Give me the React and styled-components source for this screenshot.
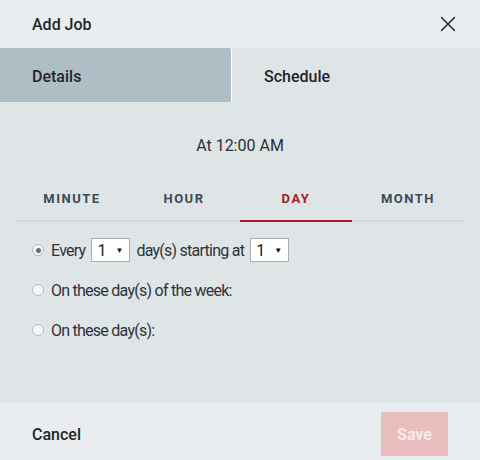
import React, { useState } from 'react'
import styled, { createGlobalStyle } from 'styled-components'

const GlobalStyle = createGlobalStyle`
  html, body {
    margin: 0;
    padding: 0;
    background: #e9edf0;
  }
  body {
    font-family: Roboto, "Liberation Sans", Arial, sans-serif;
    color: #212529;
  }
`

const Dialog = styled.div`
  width: 480px;
  height: 460px;
  display: flex;
  flex-direction: column;
  background: #e9edf0;
  overflow: hidden;
`

const Header = styled.div`
  height: 48px;
  display: flex;
  align-items: center;
  justify-content: space-between;
  padding: 0 20px 0 32px;
`

const Title = styled.div`
  font-size: 16px;
  font-weight: 500;
  color: #212529;
`

const CloseButton = styled.button`
  border: 0;
  background: none;
  padding: 0;
  width: 24px;
  height: 24px;
  display: flex;
  align-items: center;
  justify-content: center;
  cursor: pointer;
`

const TabBar = styled.div`
  height: 54px;
  display: grid;
  grid-template-columns: 232px 1fr;
  background: #dfe4e7;
`

const PageTab = styled.div`
  display: flex;
  align-items: center;
  padding-left: 32px;
  padding-top: 2px;
  font-size: 16px;
  font-weight: 500;
  color: #212529;
  background: ${(p) => (p.$active ? '#afbdc4' : '#dfe4e7')};
  border-top-right-radius: ${(p) => (p.$active ? '3px' : '0')};
  border-right: ${(p) => (p.$active ? '1px solid #ffffff' : '0')};
`

const Body = styled.div`
  flex: 1;
  background: #dfe4e7;
  padding: 34px 16px 0;
`

const Summary = styled.div`
  text-align: center;
  font-size: 16px;
  line-height: 20px;
  color: #2b3034;
`

const PeriodTabs = styled.div`
  margin-top: 20px;
  display: grid;
  grid-template-columns: repeat(4, 1fr);
  border-bottom: 2px solid #d2d8dc;
`

const PeriodTab = styled.div`
  height: 44px;
  display: flex;
  align-items: center;
  justify-content: center;
  margin-bottom: -2px;
  font-size: 13px;
  font-weight: 700;
  letter-spacing: 1.5px;
  color: ${(p) => (p.$active ? '#a61e24' : '#3c4a53')};
  border-bottom: 2px solid ${(p) => (p.$active ? '#a61e24' : 'transparent')};
  cursor: pointer;
`

const Options = styled.div`
  padding: 16px 16px 0;
  display: flex;
  flex-direction: column;
  gap: 16px;
`

const OptionRow = styled.label`
  height: 24px;
  display: flex;
  align-items: center;
  gap: 6px;
  font-size: 16px;
  color: #2e3338;
  letter-spacing: -0.75px;
`

const Radio = styled.span`
  width: 12px;
  height: 12px;
  box-sizing: border-box;
  margin-right: 1px;
  border-radius: 50%;
  border: 1px solid #b5b9bc;
  background: #f7f7f7;
  display: flex;
  align-items: center;
  justify-content: center;
  flex-shrink: 0;

  &::after {
    content: '';
    width: 5px;
    height: 5px;
    border-radius: 50%;
    background: ${(p) => (p.$checked ? '#6a6e71' : 'transparent')};
  }
`

const SelectBox = styled.span`
  width: 39px;
  height: 24px;
  box-sizing: border-box;
  background: #ffffff;
  border: 1px solid #a9adb0;
  display: flex;
  align-items: center;
  justify-content: space-between;
  padding: 0 6px 0 5px;
  font-size: 16px;
  letter-spacing: 0;
  color: #222;
`

const Arrow = styled.span`
  font-size: 8px;
  color: #111;
`

const Footer = styled.div`
  height: 58px;
  display: flex;
  align-items: flex-start;
  justify-content: space-between;
  padding: 10px 32px 0;
  box-sizing: border-box;
`

const TextButton = styled.button`
  height: 44px;
  border: 0;
  background: none;
  padding: 0;
  font-family: inherit;
  font-size: 16px;
  font-weight: 500;
  color: #212529;
`

const SaveButton = styled.button`
  width: 67px;
  height: 44px;
  border: 0;
  background: #e9bcbd;
  color: #f6ebeb;
  font-family: inherit;
  font-size: 16px;
  font-weight: 700;
`

const periods = ['MINUTE', 'HOUR', 'DAY', 'MONTH']

function Select({ value }) {
  return (
    <SelectBox>
      {value}
      <Arrow>▼</Arrow>
    </SelectBox>
  )
}

export default function App() {
  const [period, setPeriod] = useState('DAY')

  return (
    <>
      <GlobalStyle />
      <Dialog>
        <Header>
          <Title>Add Job</Title>
          <CloseButton aria-label="Close">
            <svg width="16" height="16" viewBox="0 0 16 16">
              <path d="M1.5 1.5 L14.5 14.5 M14.5 1.5 L1.5 14.5" stroke="#2a2d30" strokeWidth="1.6" strokeLinecap="round" />
            </svg>
          </CloseButton>
        </Header>
        <TabBar>
          <PageTab $active>Details</PageTab>
          <PageTab>Schedule</PageTab>
        </TabBar>
        <Body>
          <Summary>At 12:00 AM</Summary>
          <PeriodTabs>
            {periods.map((p) => (
              <PeriodTab key={p} $active={p === period} onClick={() => setPeriod(p)}>
                {p}
              </PeriodTab>
            ))}
          </PeriodTabs>
          <Options>
            <OptionRow>
              <Radio $checked />
              Every <Select value="1" /> day(s) starting at <Select value="1" />
            </OptionRow>
            <OptionRow>
              <Radio />
              On these day(s) of the week:
            </OptionRow>
            <OptionRow>
              <Radio />
              On these day(s):
            </OptionRow>
          </Options>
        </Body>
        <Footer>
          <TextButton>Cancel</TextButton>
          <SaveButton disabled>Save</SaveButton>
        </Footer>
      </Dialog>
    </>
  )
}
